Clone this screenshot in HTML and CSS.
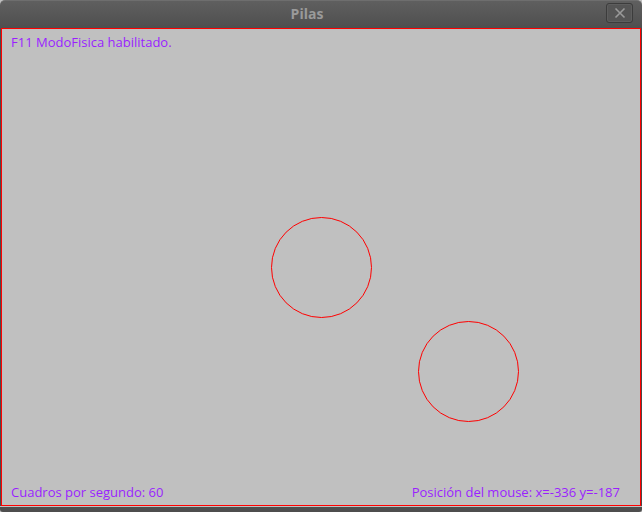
FILE: index.html
```html
<!DOCTYPE html>
<html>
<head>
<meta charset="utf-8">
<link rel="stylesheet" href="styles.css">
</head>
<body>
<div class="window">
  <div class="titlebar">
    <span class="title">Pilas</span>
    <div class="close">
      <svg width="12" height="12" viewBox="0 0 12 12"><path d="M1.5 1.5 L10.5 10.5 M10.5 1.5 L1.5 10.5" stroke="#9a9a9a" stroke-width="1.6" fill="none"/></svg>
    </div>
  </div>
  <div class="frame">
    <div class="canvas">
      <svg class="shapes" width="638" height="476" viewBox="0 0 638 476">
        <circle cx="319.5" cy="238.5" r="50" stroke="#ff0000" stroke-width="1" fill="none"/>
        <circle cx="466.5" cy="342.5" r="50" stroke="#ff0000" stroke-width="1" fill="none"/>
      </svg>
      <div class="msg top">F11 ModoFisica habilitado.</div>
      <div class="status">
        <span class="msg">Cuadros por segundo: 60</span>
        <span class="msg">Posición del mouse: x=-336 y=-187</span>
      </div>
    </div>
  </div>
  <div class="bottom"></div>
</div>
</body>
</html>
```

FILE: styles.css
```css
html, body {
  margin: 0;
  padding: 0;
  background: #c0c0c0;
}
.window {
  width: 642px;
  height: 512px;
  display: flex;
  flex-direction: column;
  background: #c0c0c0;
}
.titlebar {
  height: 28px;
  box-sizing: border-box;
  background: linear-gradient(#5f5f5f, #4f4f4f);
  border-radius: 5px 5px 0 0;
  border-top: 1px solid #6e6e6e;
  position: relative;
  display: flex;
  align-items: center;
  justify-content: center;
}
.title {
  font-family: "Open Sans", "DejaVu Sans", sans-serif;
  font-weight: 700;
  font-size: 14px;
  color: #9a9a9a;
  margin-left: -28px;
  margin-top: -2px;
}
.close {
  position: absolute;
  right: 9px;
  top: 2px;
  width: 27px;
  height: 20px;
  box-sizing: border-box;
  border: 1px solid #3c3c3c;
  border-radius: 3px;
  box-shadow: inset 0 0 0 1px #5e5e5e;
  background: #555555;
  display: flex;
  align-items: center;
  justify-content: center;
}
.frame {
  flex: 1;
  background: #4a4a4a;
  padding: 0 1px;
  display: flex;
}
.canvas {
  flex: 1;
  position: relative;
  border: 1px solid #ff0000;
  background: #c0c0c0;
  display: flex;
  flex-direction: column;
  justify-content: space-between;
  padding: 6px 20px 5px 9px;
}
.shapes {
  position: absolute;
  left: 0;
  top: 0;
}
.msg {
  font-family: "Open Sans", "DejaVu Sans", sans-serif;
  font-size: 13px;
  line-height: 15px;
  color: #9a1fff;
  position: relative;
}
.status {
  display: flex;
  justify-content: space-between;
}
.bottom {
  height: 6px;
  border-top: 1px solid #c0c0c0;
  background: #4e4e4e;
  border-radius: 0 0 3px 3px;
  box-sizing: border-box;
}
```
